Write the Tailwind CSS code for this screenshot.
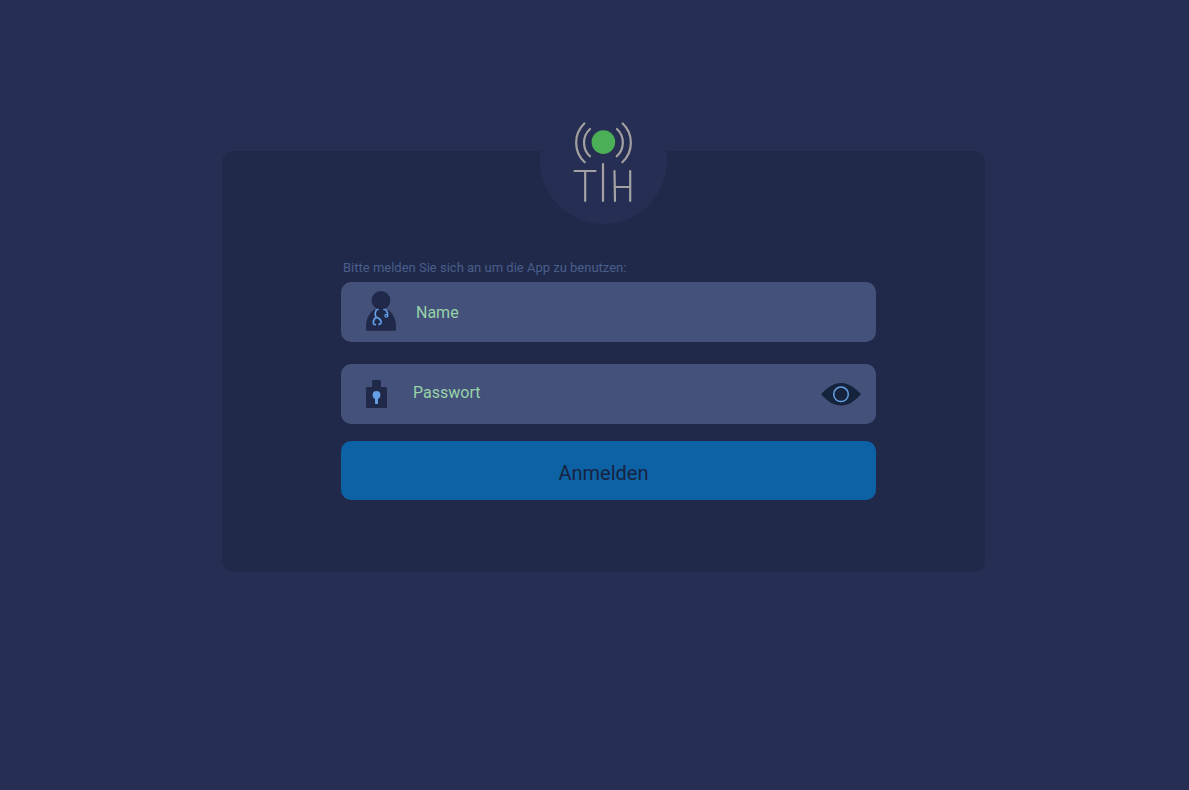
<!DOCTYPE html>
<html lang="de">
<head>
<meta charset="utf-8">
<meta name="viewport" content="width=device-width, initial-scale=1">
<title>TIH – Anmelden</title>
<script src="https://cdn.jsdelivr.net/npm/@tailwindcss/browser@4"></script>
</head>
<body class="min-h-screen bg-[#262e53] font-['Roboto','Liberation_Sans',sans-serif]">
<main class="pt-[151px] pr-[204px] pb-12 pl-[222px]">
  <section class="flex flex-col items-center rounded-xl bg-[#202949] pr-[109px] pb-[72px] pl-[119px]">
    <div class="-mt-[54px] mr-[-109px] ml-[-119px] flex size-[127px] self-center rounded-full bg-[#262e53]">
      <svg role="img" aria-label="TIH" class="size-full" viewBox="0 0 127 127" fill="none" stroke="#a3a1a2" stroke-width="2.2" stroke-linecap="round">
        <circle cx="63.4" cy="45.1" r="11.8" fill="#4caf57" stroke="none"/>
        <path d="M44.3 26.5A26.6 26.6 0 0 0 44.7 65.2M50 32A18.6 18.6 0 0 0 50 59.3M82.7 26.5A26.6 26.6 0 0 1 82.3 65.2M77 32A18.6 18.6 0 0 1 76.7 59.3"/>
        <line x1="34.5" y1="74" x2="55.5" y2="74"/>
        <line x1="45.2" y1="74" x2="45.2" y2="104"/>
        <line x1="63" y1="67" x2="63" y2="104"/>
        <line x1="74.5" y1="74" x2="75" y2="104"/>
        <line x1="90.2" y1="74" x2="90.2" y2="104"/>
        <line x1="75" y1="90" x2="90" y2="90"/>
      </svg>
    </div>
    <form class="mt-[34px] flex w-full flex-col">
      <p class="pl-0.5 text-[13px] leading-5 text-[#4a5e8b]">Bitte melden Sie sich an um die App zu benutzen:</p>
      <div class="mt-1 flex h-[60px] items-center rounded-[10px] bg-[#44517b] pl-[25px]">
        <label for="name" class="shrink-0">
          <svg role="img" aria-label="Name" class="block h-[42px] w-[30px]" viewBox="0 0 30 42" fill="none">
            <circle cx="15" cy="9.4" r="9.4" fill="#202949"/>
            <path d="M0 38.5V35C0 27 4 21 9.5 18H20.5C26 21 30 27 30 35V38.5Q30 39.7 28.8 39.7H1.2Q0 39.7 0 38.5Z" fill="#202949"/>
            <path d="M12 18.5Q9.8 18.5 9.8 20.5Q8.8 22 9.3 24.2L10.3 26.3Q7.6 27.8 7.4 31Q7 33.6 9.3 33.6M10.3 26.3Q14.3 27.2 15 30.2Q15.6 33 13 33.3M18 18.5Q20.8 18.5 20.8 20.5Q22.3 22.3 21.5 25" stroke="#639de5" stroke-width="1.7" stroke-linecap="round" stroke-linejoin="round"/>
            <circle cx="20.3" cy="24.8" r="1.4" stroke="#639de5" stroke-width="1.2"/>
          </svg>
        </label>
        <input id="name" type="text" autocomplete="username" placeholder="Name" class="h-full min-w-0 flex-1 rounded-r-[10px] bg-transparent pr-4 pl-5 text-base text-[#97d3a9] outline-none placeholder:text-[#97d3a9]">
      </div>
      <div class="mt-[22px] flex h-[60px] items-center rounded-[10px] bg-[#44517b] pr-[15px] pl-[25px]">
        <label for="passwort" class="shrink-0">
          <svg role="img" aria-label="Passwort" class="block h-7 w-[21px]" viewBox="0 0 21 28">
            <path d="M7.500 0H13.5Q15 0 15 1.5V7H19.5Q21 7 21 8.5V26.5Q21 28 19.5 28H1.5Q0 28 0 26.5V8.5Q0 7 1.5 7H6V1.5Q6 0 7.500 0Z" fill="#202949"/>
            <circle cx="10.5" cy="15" r="3.9" fill="#659fe6"/>
            <rect x="9" y="17" width="3" height="7" rx="0.8" fill="#659fe6"/>
          </svg>
        </label>
        <input id="passwort" type="password" autocomplete="current-password" placeholder="Passwort" class="h-full min-w-0 flex-1 bg-transparent pr-4 pb-1 pl-[26px] text-base text-[#97d3a9] outline-none placeholder:text-[#97d3a9]">
        <button type="button" aria-label="Passwort anzeigen" class="shrink-0 cursor-pointer">
          <svg aria-hidden="true" class="h-6 w-10" viewBox="0 0 40 24">
            <path d="M0 12.3C6.5 5 13 1 20 1S33.5 5 40 12.3C33.5 19.6 27 23.6 20 23.6S6.5 19.6 0 12.3Z" fill="#15233c"/>
            <circle cx="20" cy="12.3" r="7.3" fill="none" stroke="#659fe6" stroke-width="1.5"/>
          </svg>
        </button>
      </div>
      <button type="submit" class="mt-[17px] h-[59px] cursor-pointer rounded-[10px] bg-[#0d61a5] pt-1 pr-2.5 text-xl text-[#17233f]">Anmelden</button>
    </form>
  </section>
</main>
</body>
</html>
